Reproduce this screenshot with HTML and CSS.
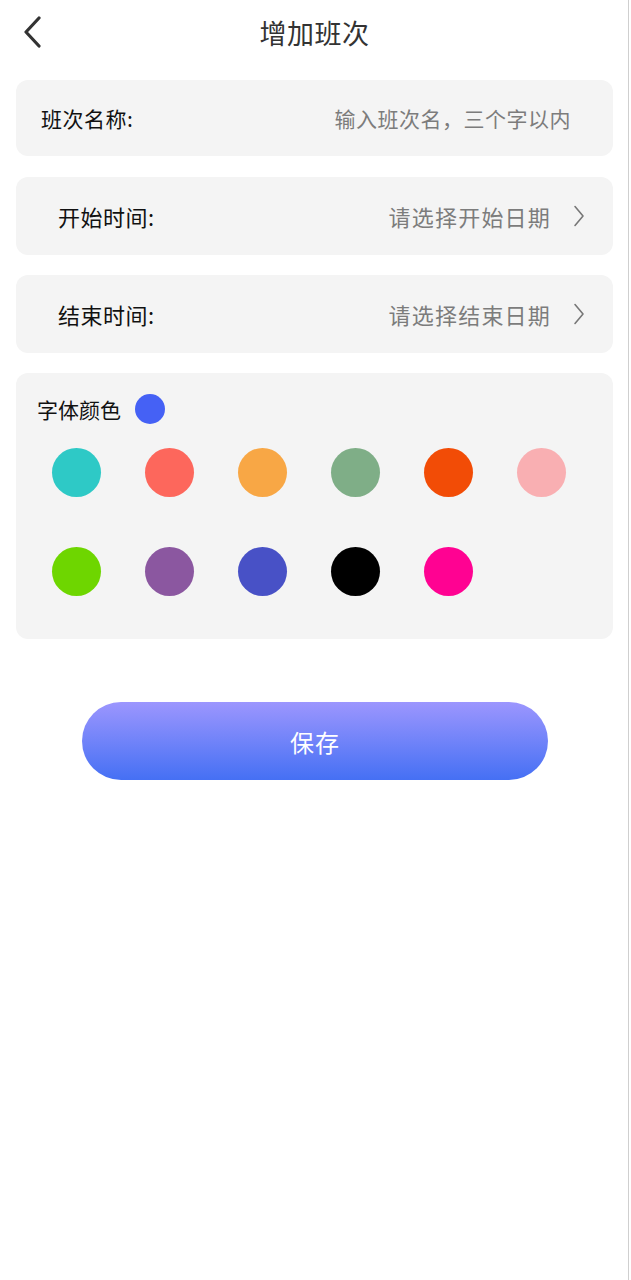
FILE: index.html
```html
<!DOCTYPE html>
<html lang="zh">
<head>
<meta charset="utf-8">
<title>增加班次</title>
<link rel="stylesheet" href="styles.css">
</head>
<body>
<div class="page">
  <header class="nav">
    <svg class="back" width="20" height="32" viewBox="0 0 20 32"><path d="M17 2 L4 16 L17 30" fill="none" stroke="#333" stroke-width="3.2" stroke-linecap="round" stroke-linejoin="round"/></svg>
    <h1 class="title">增加班次</h1>
  </header>

  <div class="card row name-row">
    <span class="label">班次名称:</span>
    <span class="placeholder small">输入班次名，三个字以内</span>
  </div>

  <div class="card row pick-row">
    <span class="label">开始时间:</span>
    <span class="right">
      <span class="placeholder">请选择开始日期</span>
      <svg class="chev" width="12" height="22" viewBox="0 0 12 22"><path d="M2 1.5 L10 11 L2 20.5" fill="none" stroke="#777" stroke-width="1.6" stroke-linecap="round" stroke-linejoin="round"/></svg>
    </span>
  </div>

  <div class="card row pick-row">
    <span class="label">结束时间:</span>
    <span class="right">
      <span class="placeholder">请选择结束日期</span>
      <svg class="chev" width="12" height="22" viewBox="0 0 12 22"><path d="M2 1.5 L10 11 L2 20.5" fill="none" stroke="#777" stroke-width="1.6" stroke-linecap="round" stroke-linejoin="round"/></svg>
    </span>
  </div>

  <div class="card colors">
    <div class="color-head">
      <span class="color-label">字体颜色</span>
      <span class="current"></span>
    </div>
    <div class="grid">
      <span class="dot c1"></span>
      <span class="dot c2"></span>
      <span class="dot c3"></span>
      <span class="dot c4"></span>
      <span class="dot c5"></span>
      <span class="dot c6"></span>
      <span class="dot c7"></span>
      <span class="dot c8"></span>
      <span class="dot c9"></span>
      <span class="dot c10"></span>
      <span class="dot c11"></span>
    </div>
  </div>

  <div class="btn-wrap">
    <button class="save">保存</button>
  </div>
</div>
</body>
</html>
```

FILE: styles.css
```css
html, body {
  margin: 0;
  padding: 0;
  background: #fff;
}
body {
  font-family: "Noto Sans CJK SC", "Noto Sans", sans-serif;
  width: 631px;
  height: 1280px;
}
.page {
  width: 629px;
  min-height: 1280px;
  border-right: 1px solid #cfcfcf;
  box-sizing: border-box;
  padding: 0 15px 0 16px;
}
.nav {
  position: relative;
  height: 80px;
  display: flex;
  align-items: flex-start;
  justify-content: center;
}
.back {
  position: absolute;
  left: 6px;
  top: 16px;
}
.title {
  margin: 13px 0 0;
  font-size: 27px;
  font-weight: 400;
  color: #333;
  line-height: 40px;
  letter-spacing: 0.5px;
}
.card {
  background: #f4f4f4;
  border-radius: 12px;
}
.row {
  display: flex;
  align-items: center;
  justify-content: space-between;
}
.name-row {
  height: 76px;
  padding: 0 42px 0 25px;
  margin-bottom: 21px;
}
.pick-row {
  height: 78px;
  padding: 0 28px 0 42px;
  margin-bottom: 20px;
}
.label {
  font-size: 21px;
  color: #111;
  letter-spacing: 0.5px;
}
.pick-row .label {
  font-size: 22px;
}
.placeholder {
  font-size: 22px;
  color: #7c7c7c;
  letter-spacing: 1.2px;
}
.placeholder.small {
  font-size: 21px;
  letter-spacing: 0.5px;
}
.right {
  display: flex;
  align-items: center;
  gap: 22px;
}
.chev {
  display: block;
}
.colors {
  height: 266px;
  padding: 20px 0 0 0;
  box-sizing: border-box;
}
.color-head {
  display: flex;
  align-items: center;
  padding-left: 21px;
  height: 32px;
  gap: 14px;
}
.color-label {
  font-size: 21px;
  color: #111;
}
.current {
  width: 30px;
  height: 30px;
  border-radius: 50%;
  background: #4561f5;
}
.grid {
  display: grid;
  grid-template-columns: repeat(6, 93px);
  row-gap: 50px;
  padding: 23px 0 0 14px;
  justify-items: center;
}
.dot {
  width: 49px;
  height: 49px;
  border-radius: 50%;
}
.c1 { background: #2ec9c6; }
.c2 { background: #fd675c; }
.c3 { background: #f8a745; }
.c4 { background: #7fae87; }
.c5 { background: #f24c06; }
.c6 { background: #f9afb2; }
.c7 { background: #6ed600; }
.c8 { background: #8b57a0; }
.c9 { background: #4851c6; }
.c10 { background: #000; }
.c11 { background: #ff0292; }
.btn-wrap {
  display: flex;
  justify-content: center;
  padding-top: 63px;
  margin: 0 -15px 0 -16px;
}
.save {
  margin-left: 2px;
  width: 466px;
  height: 78px;
  border: none;
  border-radius: 39px;
  background: linear-gradient(to bottom, #9c96fe, #4570f4);
  color: #fff;
  font-family: "Noto Sans CJK SC", sans-serif;
  font-size: 24px;
  letter-spacing: 1px;
}
```
